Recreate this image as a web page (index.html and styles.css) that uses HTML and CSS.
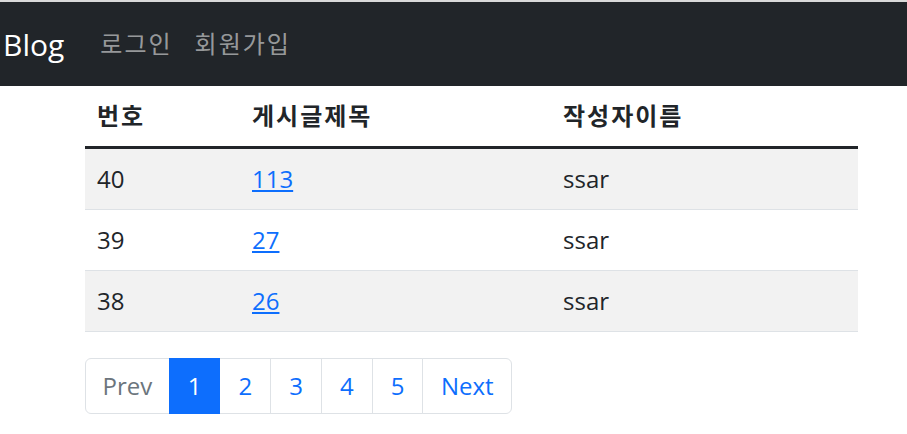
FILE: index.html
```html
<!DOCTYPE html>
<html lang="ko">
<head>
<meta charset="utf-8">
<title>Blog</title>
<link rel="stylesheet" href="styles.css">
</head>
<body>
<nav class="navbar">
  <a class="brand" href="#">Blog</a>
  <ul class="nav">
    <li><a class="nav-link ko" href="#">로그인</a></li>
    <li><a class="nav-link ko" href="#">회원가입</a></li>
  </ul>
</nav>
<main class="container">
  <table class="board">
    <colgroup>
      <col class="c1"><col class="c2"><col class="c3">
    </colgroup>
    <thead>
      <tr><th class="ko">번호</th><th class="ko">게시글제목</th><th class="ko">작성자이름</th></tr>
    </thead>
    <tbody>
      <tr class="odd"><td>40</td><td><a href="#">113</a></td><td>ssar</td></tr>
      <tr><td>39</td><td><a href="#">27</a></td><td>ssar</td></tr>
      <tr class="odd"><td>38</td><td><a href="#">26</a></td><td>ssar</td></tr>
    </tbody>
  </table>
  <ul class="pagination">
    <li class="page disabled"><span class="page-link">Prev</span></li>
    <li class="page active"><a class="page-link" href="#">1</a></li>
    <li class="page"><a class="page-link" href="#">2</a></li>
    <li class="page"><a class="page-link" href="#">3</a></li>
    <li class="page"><a class="page-link" href="#">4</a></li>
    <li class="page"><a class="page-link" href="#">5</a></li>
    <li class="page"><a class="page-link" href="#">Next</a></li>
  </ul>
</main>
</body>
</html>
```
FILE: styles.css
```css
* { box-sizing: border-box; }
html, body { margin: 0; padding: 0; }
body {
  font-family: "Open Sans", "Noto Sans CJK KR", sans-serif;
  font-size: 24px;
  line-height: 1.5;
  color: #212529;
  background: #fff;
  border-top: 2px solid #d9d9d9;
}
.ko { letter-spacing: 2px; }
.navbar {
  background: #212529;
  display: flex;
  align-items: center;
  padding: 12px 3px;
  height: 84px;
}
.brand {
  color: #fff;
  text-decoration: none;
  font-size: 30px;
  line-height: 45px;
  padding: 7.5px 0;
  margin-right: 24px;
}
.nav {
  display: flex;
  list-style: none;
  margin: 0;
  padding: 0;
}
.nav-link {
  display: block;
  color: rgba(255,255,255,.55);
  text-decoration: none;
  padding: 12px 10px 12px 12px;
  line-height: 36px;
}
.container {
  padding: 0 49px 0 85px;
}
.board {
  width: 773px;
  border-collapse: collapse;
  margin: 0 0 26px 0;
}
.c1 { width: 155px; }
.c2 { width: 311px; }
.c3 { width: 307px; }
.board th, .board td {
  text-align: left;
  padding: 12px 12px;
  line-height: 36px;
  border-bottom: 1px solid #dee2e6;
}
.board th {
  font-weight: 700;
  border-bottom: 3px solid #212529;
}
.board tr.odd td { background: #f2f2f2; }
.board a { color: #0d6efd; text-decoration: underline; }
.pagination {
  display: flex;
  list-style: none;
  margin: 0;
  padding: 0;
}
.page-link {
  display: block;
  padding: 9px 18px;
  line-height: 36px;
  border: 1px solid #dee2e6;
  margin-left: -1px;
  color: #0d6efd;
  text-decoration: none;
  background: #fff;
}
.page:first-child .page-link {
  margin-left: 0;
  padding: 9px 16.5px;
  border-radius: 6px 0 0 6px;
}
.page:last-child .page-link {
  padding: 9px 17.5px;
  border-radius: 0 6px 6px 0;
}
.page.disabled .page-link { color: #6c757d; }
.page.active .page-link {
  background: #0d6efd;
  border-color: #0d6efd;
  color: #fff;
  position: relative;
}
```
